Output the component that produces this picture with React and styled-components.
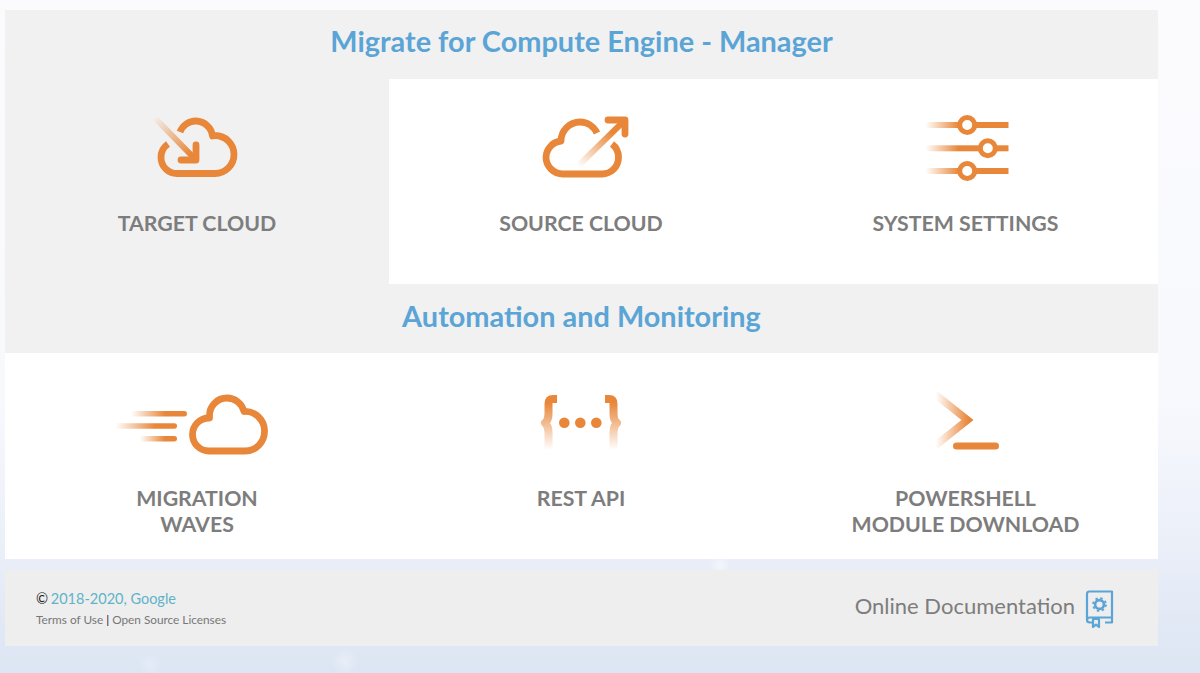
import React from 'react';
import styled, {createGlobalStyle} from 'styled-components';

const ORANGE = '#e8873a';
const BLUE = '#5ba4d6';
const FONT = 'Lato, "Open Sans", "Liberation Sans", sans-serif';

const Global = createGlobalStyle`
  html, body { margin: 0; height: 100%; }
  body {
    font-family: ${FONT};
    overflow: hidden;
    background:
      radial-gradient(circle at 345px 662px, rgba(255,255,255,.35), transparent 14px),
      radial-gradient(circle at 150px 665px, rgba(255,255,255,.25), transparent 12px),
      radial-gradient(circle at 720px 565px, rgba(255,255,255,.5), transparent 10px),
      linear-gradient(#fbfbfe 0, #f8f9fd 400px, #e9eef8 560px, #dce5f3 673px);
  }
`;

const Page = styled.div`
  width: 1200px;
  height: 673px;
  padding: 10px 42px 0 5px;
  box-sizing: border-box;
`;

const Panel = styled.main`
  background: #f1f1f1;
`;

const SectionTitle = styled.h1`
  margin: 0;
  height: 69px;
  line-height: ${props => props.$line}px;
  text-align: center;
  font-size: 28.9px;
  font-weight: 700;
  color: ${BLUE};
`;

const Row = styled.section`
  display: grid;
  grid-template-columns: 384px 384px 385px;
  height: ${props => props.$height}px;
`;

const Cell = styled.a`
  display: flex;
  flex-direction: column;
  align-items: center;
  padding-top: ${props => props.$top}px;
  background: ${props => (props.$muted ? '#f1f1f1' : '#fff')};
`;

const Icon = styled.svg`
  display: block;
  height: 80px;
  width: ${props => props.$width || 100}px;
  fill: none;
`;

const Label = styled.span`
  margin-top: 25px;
  font-size: 21.3px;
  line-height: 26px;
  font-weight: 700;
  color: #7d7d7d;
  text-align: center;
`;

const Footer = styled.footer`
  display: flex;
  justify-content: space-between;
  align-items: center;
  height: 76px;
  margin-top: 11px;
  padding: 0 43px 0 31px;
  background: #eee;
`;

const Copy = styled.div`
  font-size: 14.5px;
  line-height: 18px;
  color: #222;
  margin-top: 1px;
`;

const Teal = styled.span`
  margin-left: -1px;
  color: #5fb3c9;
`;

const Legal = styled.div`
  margin-top: 5px;
  font-size: 11.8px;
  line-height: 14px;
  color: #777;
`;

const Bar = styled.span`
  color: #222;
`;

const DocLink = styled.a`
  display: flex;
  align-items: center;
  gap: 10px;
  font-size: 22px;
  color: #7d7d7d;
`;

const DocText = styled.span`
  margin-top: -6px;
`;

const BookSvg = styled.svg`
  display: block;
  width: 30px;
  height: 40px;
  fill: none;
`;

// fades a stroke along a line, coordinates are the ones of the picture
function Fade({id, x1, y1, x2, y2}) {
  return (
    <linearGradient id={id} gradientUnits="userSpaceOnUse" x1={x1} y1={y1} x2={x2} y2={y2}>
      <stop offset="0" stopColor={ORANGE} stopOpacity="0" />
      <stop offset="1" stopColor={ORANGE} />
    </linearGradient>
  );
}

function TargetCloud() {
  return (
    <Icon viewBox="147 105 100 80">
      <defs><Fade id="target" x1="154" y1="117" x2="190" y2="154" /></defs>
      <g stroke={ORANGE} strokeWidth="6.8" strokeLinecap="round" strokeLinejoin="round">
        <path d="M168 144 A16 16 0 0 0 161 157.5 A16 16 0 0 0 177 173.5 H215 A19 19 0 0 0 215 135.5 L212.5 136 A17 17 0 0 0 196 121 A17 17 0 0 0 180 132" strokeLinecap="butt" />
        <path d="M196 145 V160 H181" />
      </g>
      <path d="M154 117 L195 159" stroke="url(#target)" strokeWidth="6" />
    </Icon>
  );
}

function SourceCloud() {
  return (
    <Icon viewBox="531 105 100 80">
      <defs><Fade id="source" x1="578" y1="166" x2="612" y2="132" /></defs>
      <g stroke={ORANGE} strokeWidth="6.8" strokeLinejoin="round">
        <path d="M597 133 A19 19 0 0 0 580 122 A19 19 0 0 0 561 141 A17 17 0 0 0 546 157 A17 17 0 0 0 563 174 H602 A16.5 16.5 0 0 0 618.5 157.5 A16.5 16.5 0 0 0 612 144" />
        <path d="M608 120 H625 V134" strokeLinecap="round" />
      </g>
      <path d="M578 166 L624 121" stroke="url(#source)" strokeWidth="6" />
    </Icon>
  );
}

function Settings() {
  const lines = [[125, 966.7], [148.3, 987.3], [171, 966.7]];
  return (
    <Icon viewBox="915.5 105 100 80">
      <defs><Fade id="slider" x1="925" y1="0" x2="958" y2="0" /></defs>
      {lines.map(([y, cx]) => (
        <g key={y}>
          <rect x="925" y={y - 3} width="83" height="6" fill="url(#slider)" />
          <circle cx={cx} cy={y} r="7.5" fill="#fff" stroke={ORANGE} strokeWidth="5" />
        </g>
      ))}
    </Icon>
  );
}

function Waves() {
  return (
    <Icon $width={170} viewBox="112 380 170 80">
      <defs>
        <Fade id="wave1" x1="131" y1="0" x2="165" y2="0" />
        <Fade id="wave2" x1="115" y1="0" x2="155" y2="0" />
        <Fade id="wave3" x1="140" y1="0" x2="165" y2="0" />
      </defs>
      <rect x="131" y="411" width="56" height="5.5" rx="2.7" fill="url(#wave1)" />
      <rect x="115" y="423.3" width="62" height="5.5" rx="2.7" fill="url(#wave2)" />
      <rect x="140" y="436" width="37" height="5.5" rx="2.7" fill="url(#wave3)" />
      <path d="M209.5 416 A17.5 17.5 0 0 1 227 398 A17.5 17.5 0 0 1 244 411.5 A19.5 19.5 0 0 1 264.5 431.5 A19.5 19.5 0 0 1 245 451 H209 A16.5 16.5 0 0 1 192.5 434.5 A16.5 16.5 0 0 1 209.5 418 Z" stroke={ORANGE} strokeWidth="6.8" strokeLinejoin="round" />
    </Icon>
  );
}

function RestApi() {
  return (
    <Icon viewBox="531 380 100 80">
      <defs>
        <linearGradient id="brace" gradientUnits="userSpaceOnUse" x1="0" y1="403" x2="0" y2="450">
          <stop offset="0" stopColor={ORANGE} />
          <stop offset="1" stopColor={ORANGE} stopOpacity="0" />
        </linearGradient>
      </defs>
      <g stroke="url(#brace)" strokeWidth="8" strokeLinejoin="round">
        <path d="M557 399 H553 Q548.5 399 548.5 404 V414 Q548.5 420 545 423 Q548.5 426 548.5 432 V450" />
        <path d="M605 399 H609 Q613.5 399 613.5 404 V414 Q613.5 420 617 423 Q613.5 426 613.5 432 V450" />
      </g>
      <g fill={ORANGE}>
        <circle cx="564.3" cy="422.7" r="5.3" />
        <circle cx="580.3" cy="422.7" r="5.3" />
        <circle cx="596.3" cy="422.7" r="5.3" />
      </g>
    </Icon>
  );
}

function Terminal() {
  return (
    <Icon viewBox="915.5 380 100 80">
      <defs><Fade id="prompt" x1="935" y1="0" x2="968" y2="0" /></defs>
      <path d="M933 393 L967 420 L933 447" stroke="url(#prompt)" strokeWidth="7.5" strokeMiterlimit="6" />
      <rect x="952.5" y="442.5" width="46" height="7" rx="3.5" fill={ORANGE} />
    </Icon>
  );
}

function Book() {
  return (
    <BookSvg viewBox="0 0 30 40">
      <g stroke={BLUE} strokeWidth="2.2" strokeLinejoin="round">
        <path d="M2 32 V6 Q2 3.5 4.5 3.5 H27 V34.5 H20" />
        <path d="M8 34.5 H5 Q2 34.5 2 32 Q2 29.5 5 29.5 H27" />
        <path d="M8 31 H14 V39 L11 36.7 L8 39 Z" />
        <circle cx="14.5" cy="16.5" r="4.4" strokeWidth="2.6" />
        <circle cx="14.5" cy="16.5" r="6.4" strokeWidth="1.8" strokeDasharray="2.5 2.53" />
      </g>
    </BookSvg>
  );
}

export default function App() {
  return (
    <Page>
      <Global />
      <Panel>
        <SectionTitle $line={61}>Migrate for Compute Engine - Manager</SectionTitle>
        <Row $height={205}>
          <Cell $muted $top={26}><TargetCloud /><Label>TARGET CLOUD</Label></Cell>
          <Cell $top={26}><SourceCloud /><Label>SOURCE CLOUD</Label></Cell>
          <Cell $top={26}><Settings /><Label>SYSTEM SETTINGS</Label></Cell>
        </Row>
        <SectionTitle $line={63}>Automation and Monitoring</SectionTitle>
        <Row $height={206}>
          <Cell $top={27}><Waves /><Label>MIGRATION<br />WAVES</Label></Cell>
          <Cell $top={27}><RestApi /><Label>REST API</Label></Cell>
          <Cell $top={27}><Terminal /><Label>POWERSHELL<br />MODULE DOWNLOAD</Label></Cell>
        </Row>
      </Panel>
      <Footer>
        <Copy>
          © <Teal>2018-2020, Google</Teal>
          <Legal>Terms of Use <Bar>|</Bar> Open Source Licenses</Legal>
        </Copy>
        <DocLink><DocText>Online Documentation</DocText> <Book /></DocLink>
      </Footer>
    </Page>
  );
}
